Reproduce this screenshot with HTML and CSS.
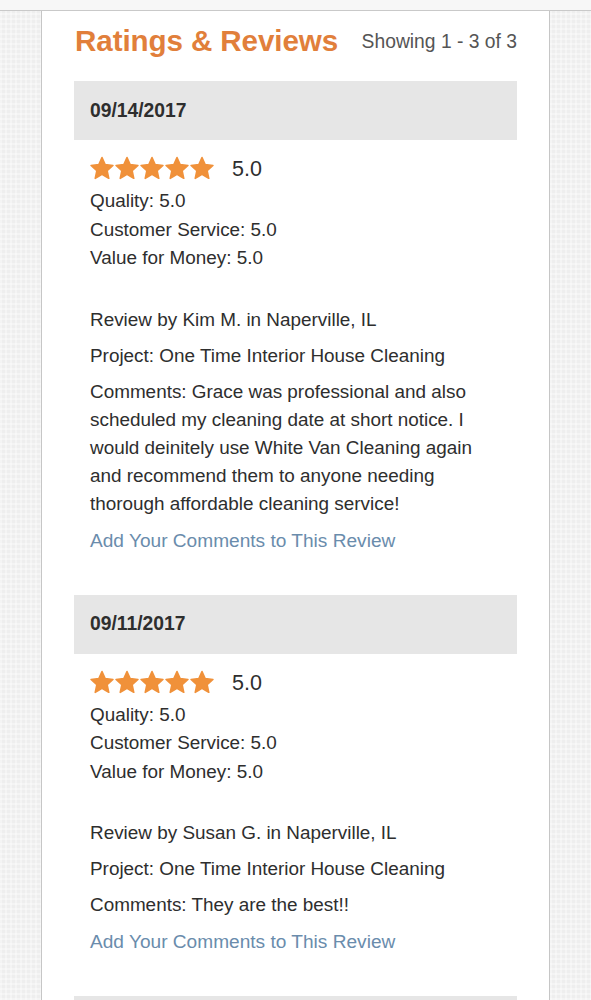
FILE: index.html
```html
<!DOCTYPE html>
<html lang="en">
<head>
  <meta charset="UTF-8">
  <meta name="viewport" content="width=device-width, initial-scale=1.0">
  <title>Ratings &amp; Reviews</title>
  <link rel="stylesheet" href="styles.css">
</head>
<body>
  <div class="top-strip"></div>

  <div class="page">
    <!-- Header -->
    <div class="reviews-header">
      <h2>Ratings &amp; Reviews</h2>
      <span class="showing">Showing 1 - 3 of 3</span>
    </div>

    <!-- Review 1 -->
    <div class="review">
      <div class="review-date">09/14/2017</div>
      <div class="review-body">
        <div class="rating-row">
          <span class="stars">
            <svg viewBox="0 0 24 24"><path d="M12 1.5L15.17 8.63 22.94 9.45 17.14 14.67 18.76 22.3 12 18.4 5.24 22.3 6.86 14.67 1.06 9.45 8.83 8.63z"/></svg>
            <svg viewBox="0 0 24 24"><path d="M12 1.5L15.17 8.63 22.94 9.45 17.14 14.67 18.76 22.3 12 18.4 5.24 22.3 6.86 14.67 1.06 9.45 8.83 8.63z"/></svg>
            <svg viewBox="0 0 24 24"><path d="M12 1.5L15.17 8.63 22.94 9.45 17.14 14.67 18.76 22.3 12 18.4 5.24 22.3 6.86 14.67 1.06 9.45 8.83 8.63z"/></svg>
            <svg viewBox="0 0 24 24"><path d="M12 1.5L15.17 8.63 22.94 9.45 17.14 14.67 18.76 22.3 12 18.4 5.24 22.3 6.86 14.67 1.06 9.45 8.83 8.63z"/></svg>
            <svg viewBox="0 0 24 24"><path d="M12 1.5L15.17 8.63 22.94 9.45 17.14 14.67 18.76 22.3 12 18.4 5.24 22.3 6.86 14.67 1.06 9.45 8.83 8.63z"/></svg>
          </span>
          <span class="score">5.0</span>
        </div>
        <ul class="sub-ratings">
          <li>Quality: 5.0</li>
          <li>Customer Service: 5.0</li>
          <li>Value for Money: 5.0</li>
        </ul>
        <p class="review-line first">Review by Kim M. in Naperville, IL</p>
        <p class="review-line">Project: One Time Interior House Cleaning</p>
        <p class="review-line">Comments: Grace was professional and also scheduled my cleaning date at short notice. I would deinitely use White Van Cleaning again and recommend them to anyone needing thorough affordable cleaning service!</p>
        <a class="add-comment" href="#">Add Your Comments to This Review</a>
      </div>
    </div>

    <!-- Review 2 -->
    <div class="review">
      <div class="review-date">09/11/2017</div>
      <div class="review-body">
        <div class="rating-row">
          <span class="stars">
            <svg viewBox="0 0 24 24"><path d="M12 1.5L15.17 8.63 22.94 9.45 17.14 14.67 18.76 22.3 12 18.4 5.24 22.3 6.86 14.67 1.06 9.45 8.83 8.63z"/></svg>
            <svg viewBox="0 0 24 24"><path d="M12 1.5L15.17 8.63 22.94 9.45 17.14 14.67 18.76 22.3 12 18.4 5.24 22.3 6.86 14.67 1.06 9.45 8.83 8.63z"/></svg>
            <svg viewBox="0 0 24 24"><path d="M12 1.5L15.17 8.63 22.94 9.45 17.14 14.67 18.76 22.3 12 18.4 5.24 22.3 6.86 14.67 1.06 9.45 8.83 8.63z"/></svg>
            <svg viewBox="0 0 24 24"><path d="M12 1.5L15.17 8.63 22.94 9.45 17.14 14.67 18.76 22.3 12 18.4 5.24 22.3 6.86 14.67 1.06 9.45 8.83 8.63z"/></svg>
            <svg viewBox="0 0 24 24"><path d="M12 1.5L15.17 8.63 22.94 9.45 17.14 14.67 18.76 22.3 12 18.4 5.24 22.3 6.86 14.67 1.06 9.45 8.83 8.63z"/></svg>
          </span>
          <span class="score">5.0</span>
        </div>
        <ul class="sub-ratings">
          <li>Quality: 5.0</li>
          <li>Customer Service: 5.0</li>
          <li>Value for Money: 5.0</li>
        </ul>
        <p class="review-line first">Review by Susan G. in Naperville, IL</p>
        <p class="review-line">Project: One Time Interior House Cleaning</p>
        <p class="review-line">Comments: They are the best!!</p>
        <a class="add-comment" href="#">Add Your Comments to This Review</a>
      </div>
    </div>

    <!-- Review 3 (cut off) -->
    <div class="review">
      <div class="review-date">&nbsp;</div>
    </div>
  </div>
</body>
</html>
```

FILE: styles.css
```css
/* General Styles */
body {
  font-family: 'Liberation Sans', Arial, sans-serif;
  color: #2e2e2e;
  margin: 0;
  padding: 0;
  background-color: #eeeeee;
  background-image:
    repeating-linear-gradient(0deg, rgba(255, 255, 255, 0.35) 0 2px, transparent 2px 5px),
    repeating-linear-gradient(90deg, rgba(255, 255, 255, 0.35) 0 2px, transparent 2px 5px);
  overflow: hidden;
}

.top-strip {
  height: 10px;
  background-color: #f7f7f7;
  border-bottom: 1px solid #c9c9c9;
}

.page {
  width: 443px;
  margin-left: 41px;
  padding: 0 32px 0 32px;
  min-height: 1000px;
  background-color: #fff;
  border-left: 1px solid #c6c6c6;
  border-right: 1px solid #c6c6c6;
}

/* Header */
.reviews-header {
  display: flex;
  justify-content: space-between;
  align-items: center;
  padding-top: 12px;
  height: 36px;
  margin-bottom: 22px;
}

.reviews-header h2 {
  margin: 0 0 0 1px;
  font-size: 29.6px;
  font-weight: bold;
  color: #e17f3b;
  letter-spacing: -0.1px;
}

.showing {
  font-size: 19.3px;
  color: #555;
  margin-top: 2px;
}

/* Review */
.review {
  margin-bottom: 40px;
}

.review-date {
  background-color: #e6e6e6;
  height: 59px;
  display: flex;
  align-items: center;
  padding: 0 16px;
  font-size: 19.3px;
  font-weight: bold;
  color: #2e2e2e;
}

.review-body {
  padding: 0 16px;
  font-size: 18.9px;
}

.rating-row {
  display: flex;
  align-items: center;
  height: 28px;
  margin-top: 14px;
  margin-bottom: 5px;
}

.stars {
  display: flex;
  gap: 1px;
  margin-right: 18px;
}

.stars svg {
  width: 24px;
  height: 24px;
  overflow: visible;
  fill: #f0913a;
  stroke: #f0913a;
  stroke-width: 1.6;
  stroke-linejoin: round;
}

.score {
  font-size: 21.5px;
  margin-top: 3px;
}

.sub-ratings {
  list-style-type: none;
  padding: 0;
  margin: 0;
}

.sub-ratings li {
  line-height: 28.5px;
}

.review-line {
  margin: 8px 0 0 0;
  line-height: 28px;
}

.review-line.first {
  margin-top: 33px;
}

.add-comment {
  display: block;
  margin-top: 9px;
  line-height: 28px;
  font-size: 19.1px;
  color: #6a8cac;
  text-decoration: none;
}
```
